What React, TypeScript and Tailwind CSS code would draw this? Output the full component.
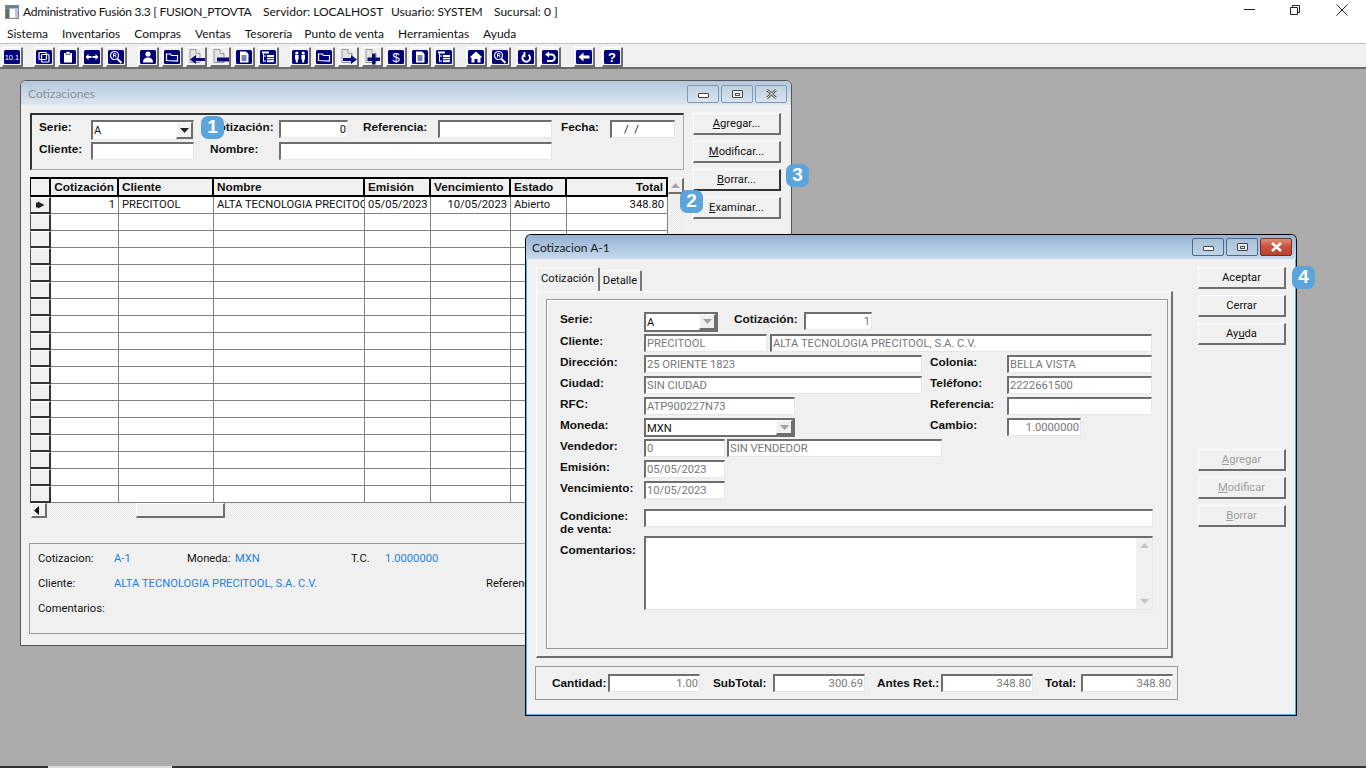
import type { ReactNode } from 'react';

const sans = "font-['Roboto',Arial,sans-serif]";
const ui = "font-['Lato',sans-serif]";
const bold = "font-['Liberation_Sans',Arial,sans-serif] font-bold text-[11.8px] leading-[14px] text-[#111] whitespace-nowrap";

const sunken = 'box-border border-t-2 border-l-2 border-r border-b border-t-[#6e6e6e] border-l-[#6e6e6e] border-r-[#e6e6e6] border-b-[#e6e6e6] bg-white';
const raised = 'box-border border-t border-l border-r-2 border-b-2 border-t-white border-l-white border-r-[#6e6e6e] border-b-[#6e6e6e] bg-[#f0f0f0]';
const raisedFocus = 'box-border border-t border-l border-r-2 border-b-2 border-t-white border-l-white border-r-[#333] border-b-[#333] bg-[#f0f0f0]';

type Glyph = string;

// Navy toolbar glyphs, all on a 16x14 box
function ToolIcon({ name }: { name: Glyph }) {
  if (name.startsWith('page')) {
    const arrow: Record<string, string> = {
      pageLeft: 'M17 9H8V6L2 10.500l6 4.500V12h9z',
      pageMinus: 'M5 8.500h12v4H5z',
      pageRight: 'M3 9h8V6l6 4.500-6 4.500V12H3z',
      pagePlus: 'M8 5h3.500v3.500H16V12h-4.500v3.500H8V12H3.500V8.500H8z',
    };
    return (
      <svg width="17" height="16" viewBox="0 0 17 16" className="block">
        <path d="M2 .5h6l4 4v9H2z" fill="#e4e4e4" stroke="#9a9a9a" />
        <path d="M8 .5v4h4" fill="#fff" stroke="#9a9a9a" />
        <path d={arrow[name]} fill="#0a0a78" />
      </svg>
    );
  }
  const w = { stroke: '#fff', fill: 'none', strokeWidth: 1.2 };
  const glyph: Record<string, ReactNode> = {
    ten: <text x="8" y="10" textAnchor="middle" fontSize="7.500" fontWeight="400" fill="#fff" fontFamily="Liberation Sans">10.1</text>,
    copy: <g {...w}><rect x="3" y="2.500" width="7.500" height="7" rx="1" /><rect x="5.500" y="4.500" width="7.500" height="7.500" rx="1" /></g>,
    clip: <g><rect x="4" y="3" width="8" height="9.500" fill="#fff" /><rect x="6" y="1.500" width="4" height="3" fill="#fff" stroke="#00007a" strokeWidth=".6" /></g>,
    swap: <path d="M1.500 7l3-3v2h3v2h-3v2zM14.500 7l-3-3v2H8.500v2h3v2z" fill="#fff" />,
    find: <g {...w}><circle cx="6.500" cy="5.500" r="4" /><path d="M9.500 9l4 4" strokeWidth="2" /><path d="M5.500 7.500v-4h1.500a1 1 0 010 2H5.500M7 5.500l1.200 2" strokeWidth=".9" /></g>,
    user: <g fill="#fff"><circle cx="8" cy="4" r="2.600" /><path d="M3 12.500c0-3.500 2-5 5-5s5 1.500 5 5z" /></g>,
    folder: <path d="M2.500 10.500V4h4l1 1.500h6v5.500z" {...w} />,
    doc: <g><path d="M4 1.500h6l2.500 2.500v8.500H4z" fill="#fff" /><path d="M5.500 6h5M5.500 8h5M5.500 10h5" stroke="#00007a" strokeWidth="1" /></g>,
    tree: <g fill="#fff"><rect x="2" y="1.500" width="7" height="2" /><rect x="3" y="3.500" width="1" height="8" /><rect x="3" y="5.500" width="3" height="1" /><rect x="3" y="10.500" width="3" height="1" /><rect x="7" y="5" width="7" height="2" /><rect x="7" y="7.800" width="7" height="1.500" /><rect x="7" y="10.200" width="7" height="2" /></g>,
    people: <g fill="#fff"><circle cx="4.800" cy="3" r="1.600" /><rect x="3" y="5" width="3.600" height="4.500" /><rect x="3.800" y="9" width="2" height="3.500" /><circle cx="11.200" cy="3" r="1.600" /><rect x="9.400" y="5" width="3.600" height="4.500" /><rect x="10.200" y="9" width="2" height="3.500" /></g>,
    dollar: <text x="8" y="12" textAnchor="middle" fontSize="13" fill="#fff" fontFamily="Liberation Sans">$</text>,
    home: <path d="M8 1.500L1.500 7.500H3.500v5h3v-3.500h3v3.500h3v-5h2z" fill="#fff" />,
    redo: <g {...w} strokeWidth="2"><path d="M10.500 4.800a3.800 3.800 0 11-4.500 0" /><path d="M6.500 2v5" strokeWidth="1.800" /></g>,
    undo: <g><path d="M5 4.500h4.500a3.200 3.200 0 010 6.500H5" {...w} strokeWidth="2" /><path d="M7 1.500v6L3 4.500z" fill="#fff" /></g>,
    back: <path d="M2.500 7l5-4.500v3h6v3h-6v3z" fill="#fff" />,
    help: <text x="8" y="12" textAnchor="middle" fontSize="13" fontWeight="700" fill="#fff" fontFamily="Liberation Sans">?</text>,
  };
  return (
    <svg width="16" height="14" viewBox="0 0 16 14" className="block">
      <rect width="16" height="14" rx="1.500" fill="#00007a" />
      {glyph[name]}
    </svg>
  );
}

const toolbar: { ml: string; icons: Glyph[] }[] = [
  { ml: 'ml-[2px]', icons: ['ten'] },
  { ml: 'ml-[11px]', icons: ['copy', 'clip', 'swap', 'find'] },
  { ml: 'ml-[11px]', icons: ['user', 'folder', 'pageLeft', 'pageMinus', 'doc', 'tree'] },
  { ml: 'ml-[11px]', icons: ['people', 'folder', 'pageRight', 'pagePlus', 'dollar', 'doc', 'tree'] },
  { ml: 'ml-[11px]', icons: ['home', 'find'] },
  { ml: 'ml-[5px]', icons: ['redo', 'undo'] },
  { ml: 'ml-[13px]', icons: ['back'] },
  { ml: 'ml-[7px]', icons: ['help'] },
];

function Badge({ n, className }: { n: number; className: string }) {
  return (
    <div className={`absolute z-20 flex h-[23px] w-[23px] items-center justify-center rounded-[7px] bg-[#5ba4dc] font-['Liberation_Sans',Arial,sans-serif] text-[19px] font-bold text-white ${className}`}>
      {n}
    </div>
  );
}

function Btn({ children, focused, disabled }: { children: ReactNode; focused?: boolean; disabled?: boolean }) {
  return (
    <div
      className={`flex h-[22px] w-[88px] items-center justify-center pt-[1px] ${focused ? raisedFocus : raised} ${sans} text-[11.2px] ${disabled ? 'text-[#a0a0a0]' : 'text-[#111]'}`}
    >
      <span>{children}</span>
    </div>
  );
}

function Input({ w, h = 'h-[18px]', right, value, gray = true }: { w: string; h?: string; right?: boolean; value?: string; gray?: boolean }) {
  return (
    <div className={`${w} ${h} shrink-0 ${sunken} ${sans} overflow-hidden whitespace-pre px-[1px] text-[11.2px] leading-[15px] ${right ? 'text-right' : ''} ${gray ? 'text-[#777]' : 'text-[#111]'}`}>
      {value}
    </div>
  );
}

function Arrow({ dir, color = '#333' }: { dir: 'up' | 'down' | 'left'; color?: string }) {
  const d = { up: 'M0 5l4.500-5 4.500 5z', down: 'M0 0l4.500 5 4.500-5z', left: 'M5 0v9L0 4.500z' }[dir];
  return (
    <svg width="9" height="9" viewBox="0 0 9 9" className="block">
      <path d={d} fill={color} transform={dir === 'left' ? '' : 'translate(0 2)'} />
    </svg>
  );
}

function Combo({ w, value, disabled, h = 'h-[20px]' }: { w: string; value: string; disabled?: boolean; h?: string }) {
  const frame = disabled
    ? 'box-border border-2 border-[#6e6e6e] bg-white'
    : sunken;
  return (
    <div className={`${w} ${h} shrink-0 ${frame} relative flex ${sans} text-[11.2px] text-[#111]`}>
      <span className="flex-1 px-[1px] leading-[17px]">{value}</span>
      <div className={`flex w-[17px] items-center justify-center ${raised}`}>
        <Arrow dir="down" color={disabled ? '#a0a0a0' : '#222'} />
      </div>
    </div>
  );
}

function WinCtl({ active, kind }: { active: boolean; kind: 'min' | 'max' | 'close' }) {
  const red = kind === 'close' && active;
  return (
    <div
      className={`flex h-[18px] w-[32px] items-center justify-center rounded-[2px] border ${
        red
          ? 'border-[#7a2e22] bg-gradient-to-b from-[#dc8c78] via-[#c8503c] to-[#c04030]'
          : active
            ? 'border-[#4f6a88] bg-gradient-to-b from-[#a8c0d8] to-[#c0d4e8]'
            : 'border-[#8298b0] bg-gradient-to-b from-[#c0d0e0] to-[#d8e4f0]'
      }`}
    >
      {kind === 'min' && <div className="mt-[3px] h-[5px] w-[11px] rounded-[1px] border border-[#444] bg-white" />}
      {kind === 'max' && (
        <div className="flex h-[8px] w-[11px] items-center justify-center rounded-[1px] border border-[#444] bg-white/60">
          <div className="h-[3px] w-[5px] border border-[#555]" />
        </div>
      )}
      {kind === 'close' && (
        <svg width="13" height="10" viewBox="0 0 13 10" className="block">
          <path d="M2 1l9 8M11 1L2 9" stroke={red ? '#fff' : '#555'} strokeWidth="2.600" />
          {!red && <path d="M2 1l9 8M11 1L2 9" stroke="#eee" strokeWidth="1" />}
        </svg>
      )}
    </div>
  );
}

const columns = [
  { w: 'w-[68px]', head: 'Cotización', end: true, right: true, cell: '1' },
  { w: 'w-[95px]', head: 'Cliente', cell: 'PRECITOOL' },
  { w: 'w-[151px]', head: 'Nombre', cell: 'ALTA TECNOLOGIA PRECITOOL, S.A. C.V.' },
  { w: 'w-[66px]', head: 'Emisión', right: true, cell: '05/05/2023' },
  { w: 'w-[80px]', head: 'Vencimiento', right: true, cell: '10/05/2023' },
  { w: 'w-[56px]', head: 'Estado', cell: 'Abierto' },
  { w: 'w-[101px]', head: 'Total', end: true, right: true, cell: '348.80' },
];

const dither = 'bg-[repeating-conic-gradient(#e4e4e4_0_25%,#fafafa_0_50%)] bg-size-[2px_2px]';

function Grid() {
  return (
    <div className="w-[638px]">
      <div className="flex h-[18px] border-t-2 border-black bg-[#f0f0f0]">
        <div className="box-border h-[16px] w-[21px] border-r-2 border-l border-black" />
        {columns.map((c) => (
          <div
            key={c.head}
            className={`${c.w} box-border flex h-[16px] items-center border-r-2 border-black px-[3px] ${c.end ? 'justify-end' : ''} ${bold}`}
          >
            {c.head}
          </div>
        ))}
      </div>
      <div className="border-t-2 border-black">
        {Array.from({ length: 18 }, (_, i) => (
          <div key={i} className="flex h-[17px] bg-white">
            <div className="box-border flex w-[21px] items-center justify-center border-l border-t border-r-2 border-b-2 border-l-[#555] border-t-white border-r-[#333] border-b-[#333] bg-[#f0f0f0]">
              {i === 0 && (
                <svg width="10" height="8" viewBox="0 0 10 8" className="block">
                  <path d="M1 1.500h2V.5L9.500 4 3 7.500V6.500H1z" fill="#222" />
                </svg>
              )}
            </div>
            {columns.map((c) => (
              <div
                key={c.head}
                className={`${c.w} box-border overflow-hidden whitespace-nowrap border-r border-b border-[#808080] px-[3px] ${sans} text-[11.2px] leading-[15px] text-[#111] ${c.right ? 'text-right' : ''}`}
              >
                {i === 0 ? c.cell : ''}
              </div>
            ))}
          </div>
        ))}
      </div>
    </div>
  );
}

function ListWindow() {
  return (
    <div className="absolute top-[80px] left-[20px] flex h-[566px] w-[772px] flex-col overflow-hidden rounded-t-[6px] border border-[#555] bg-[#f0f0f0]">
      <div className="flex h-[24px] shrink-0 items-center justify-between bg-gradient-to-b from-[#b4c8dc] to-[#dce6f0] pr-[4px] pl-[7px]">
        <span className={`${ui} pt-[2px] text-[12px] text-[#8c9196]`}>Cotizaciones</span>
        <div className="flex gap-[2px] pt-[2px]">
          <WinCtl active={false} kind="min" />
          <WinCtl active={false} kind="max" />
          <WinCtl active={false} kind="close" />
        </div>
      </div>
      <div className="flex flex-1 pt-[8px] pl-[9px]">
        <div className="w-[654px] shrink-0">
          <div className="box-border h-[57px] w-[654px] border-t-2 border-l-2 border-r border-b border-t-[#333] border-l-[#333] border-r-[#aaa] border-b-[#aaa] pt-[5px] pl-[7px]">
            <div className="flex h-[22px]">
              <div className={`${bold} w-[52px]`}>Serie:</div>
              <Combo w="w-[103px]" value="A" />
              <div className={`${bold} ml-[16px] w-[69px]`}>Cotización:</div>
              <Input w="w-[69px]" right value="0" gray={false} />
              <div className={`${bold} ml-[15px] w-[75px]`}>Referencia:</div>
              <Input w="w-[114px]" />
              <div className={`${bold} ml-[9px] w-[49px]`}>Fecha:</div>
              <Input w="w-[65px]" value="    /  /" gray={false} />
            </div>
            <div className="flex">
              <div className={`${bold} w-[52px]`}>Cliente:</div>
              <Input w="w-[103px]" />
              <div className={`${bold} ml-[16px] w-[69px]`}>Nombre:</div>
              <Input w="w-[273px]" />
            </div>
          </div>
          <div className="mt-[7px] flex">
            <Grid />
            <div className={`w-[16px] ${dither}`}>
              <div className={`mt-[1px] flex h-[16px] items-center justify-center ${raised}`}>
                <Arrow dir="up" color="#a8a8a8" />
              </div>
            </div>
          </div>
          <div className={`flex h-[15px] w-[654px] ${dither}`}>
            <div className={`ml-[1px] flex w-[16px] items-center justify-center ${raised}`}>
              <Arrow dir="left" color="#111" />
            </div>
            <div className={`ml-[89px] w-[89px] ${raised}`} />
          </div>
          <div className={`-ml-px mt-[25px] h-[91px] w-[753px] border border-[#999] ${sans} text-[11.2px] leading-[14px] text-[#111]`}>
            <div className="mt-[8px] flex pl-[8px]">
              <span className="w-[76px]">Cotizacion:</span>
              <span className="w-[73px] text-[#1e80e0]">A-1</span>
              <span className="w-[48px]">Moneda:</span>
              <span className="w-[116px] text-[#1e80e0]">MXN</span>
              <span className="w-[34px]">T.C.</span>
              <span className="text-[#1e80e0]">1.0000000</span>
            </div>
            <div className="mt-[11px] flex pl-[8px]">
              <span className="w-[76px]">Cliente:</span>
              <span className="w-[372px] text-[#1e80e0]">ALTA TECNOLOGIA PRECITOOL, S.A. C.V.</span>
              <span>Referencia:</span>
            </div>
            <div className="mt-[11px] pl-[8px]">Comentarios:</div>
          </div>
        </div>
        <div className="ml-[9px] flex flex-col gap-[6px]">
          <Btn><u>A</u>gregar...</Btn>
          <Btn><u>M</u>odificar...</Btn>
          <Btn focused><u>B</u>orrar...</Btn>
          <Btn><u>E</u>xaminar...</Btn>
        </div>
      </div>
    </div>
  );
}

function Row({ label, h = 'h-[21px]', labelPad = '', children }: { label: string; h?: string; labelPad?: string; children: ReactNode }) {
  return (
    <div className={`flex ${h}`}>
      <div className={`${bold} ${labelPad} w-[84px] shrink-0`}>{label}</div>
      {children}
    </div>
  );
}

function SideLabel({ children, w = 'w-[77px]', ml = 'ml-[8px]' }: { children: string; w?: string; ml?: string }) {
  return <div className={`${bold} ${w} ${ml} shrink-0`}>{children}</div>;
}

function QuoteWindow() {
  return (
    <div className="absolute top-[234px] left-[525px] z-10 flex h-[482px] w-[772px] flex-col overflow-hidden rounded-t-[6px] border border-black border-r-[#111] bg-[#f0f0f0] shadow-[inset_-1px_-1px_0_#4fb4e4,inset_1px_0_0_#4fb4e4]">
      <div className="flex h-[24px] shrink-0 items-center justify-between bg-gradient-to-b from-[#96b2d2] to-[#c6daee] pr-[4px] pl-[6px]">
        <span className={`${ui} pt-[2px] text-[12px] text-[#1c1c1c]`}>Cotizacion A-1</span>
        <div className="flex gap-[2px]">
          <WinCtl active kind="min" />
          <WinCtl active kind="max" />
          <WinCtl active kind="close" />
        </div>
      </div>
      <div className="flex flex-1 pt-[8px] pl-[10px]">
        <div className="w-[643px] shrink-0">
          <div className={`flex h-[24px] items-end ${sans} text-[11.2px] text-[#111]`}>
            <div className="flex h-[24px] w-[64px] items-center justify-center rounded-t-[2px] border-t border-l border-r-2 border-t-white border-l-white border-r-[#777] pb-[1px]">Cotización</div>
            <div className="flex h-[21px] w-[42px] items-center justify-center rounded-t-[2px] border-t border-r-2 border-t-white border-r-[#777] pt-[1px]">Detalle</div>
          </div>
          <div className="box-border h-[367px] w-[637px] border-t border-l border-r-2 border-b-2 border-t-white border-l-white border-r-[#6e6e6e] border-b-[#6e6e6e] pt-[7px] pl-[9px]">
            <div className="box-border h-[350px] w-[622px] border border-[#999] pt-[12px] pl-[13px] shadow-[inset_1px_1px_0_#fff]">
              <Row label="Serie:" h="h-[22px]">
                <Combo w="w-[74px]" value="A" disabled />
                <SideLabel w="w-[70px]" ml="ml-[16px]">Cotización:</SideLabel>
                <Input w="w-[68px]" right value="1" />
              </Row>
              <Row label="Cliente:">
                <Input w="w-[123px]" value="PRECITOOL" />
                <div className="w-[3px]" />
                <Input w="w-[382px]" value="ALTA TECNOLOGIA PRECITOOL, S.A. C.V." />
              </Row>
              <Row label="Dirección:">
                <Input w="w-[278px]" value="25 ORIENTE 1823" />
                <SideLabel>Colonia:</SideLabel>
                <Input w="w-[145px]" value="BELLA VISTA" />
              </Row>
              <Row label="Ciudad:">
                <Input w="w-[278px]" value="SIN CIUDAD" />
                <SideLabel>Teléfono:</SideLabel>
                <Input w="w-[145px]" value="2222661500" />
              </Row>
              <Row label="RFC:">
                <Input w="w-[151px]" value="ATP900227N73" />
                <SideLabel ml="ml-[135px]">Referencia:</SideLabel>
                <Input w="w-[145px]" />
              </Row>
              <Row label="Moneda:">
                <Combo w="w-[151px]" value="MXN" disabled h="h-[19px]" />
                <SideLabel ml="ml-[135px]">Cambio:</SideLabel>
                <Input w="w-[74px]" right value="1.0000000" />
              </Row>
              <Row label="Vendedor:">
                <Input w="w-[81px]" value="0" />
                <div className="w-[2px]" />
                <Input w="w-[215px]" value="SIN VENDEDOR" />
              </Row>
              <Row label="Emisión:">
                <Input w="w-[81px]" value="05/05/2023" />
              </Row>
              <Row label="Vencimiento:" h="h-[28px]">
                <Input w="w-[81px]" value="10/05/2023" />
              </Row>
              <Row label="Condicione:" h="h-[27px]">
                <Input w="w-[509px]" />
              </Row>
              <div className={`${bold} -mt-[14px] h-[14px]`}>de venta:</div>
              <Row label="Comentarios:" labelPad="pt-[7px]">
                <div className={`flex h-[74px] w-[509px] ${sunken} justify-end`}>
                  <div className="flex w-[16px] flex-col items-center justify-between bg-[#f0f0f0] py-[3px]">
                    <Arrow dir="up" color="#c4c4c4" />
                    <Arrow dir="down" color="#c4c4c4" />
                  </div>
                </div>
              </Row>
            </div>
          </div>
          <div className="-ml-px mt-[8px] box-border flex h-[34px] w-[643px] items-center border border-[#999] pl-[16px]">
            <div className={`${bold} w-[56px]`}>Cantidad:</div>
            <Input w="w-[92px]" right value="1.00" />
            <div className={`${bold} ml-[13px] w-[60px]`}>SubTotal:</div>
            <Input w="w-[92px]" right value="300.69" />
            <div className={`${bold} ml-[12px] w-[64px]`}>Antes Ret.:</div>
            <Input w="w-[92px]" right value="348.80" />
            <div className={`${bold} ml-[12px] w-[36px]`}>Total:</div>
            <Input w="w-[92px]" right value="348.80" />
          </div>
        </div>
        <div className="ml-[19px] flex flex-col">
          <div className="flex flex-col gap-[6px]">
            <Btn>Aceptar</Btn>
            <Btn>Cerrar</Btn>
            <Btn>Ay<u>u</u>da</Btn>
          </div>
          <div className="mt-[104px] flex flex-col gap-[6px]">
            <Btn disabled><u>A</u>gregar</Btn>
            <Btn disabled><u>M</u>odificar</Btn>
            <Btn disabled><u>B</u>orrar</Btn>
          </div>
        </div>
      </div>
    </div>
  );
}

export default function App() {
  return (
    <div className="relative flex h-[768px] w-[1366px] flex-col overflow-hidden bg-[#ababab]">
      <div className="flex h-[24px] items-center bg-white pl-[5px]">
        <svg width="14" height="14" viewBox="0 0 14 14" className="block shrink-0">
          <rect x=".5" y=".5" width="13" height="13" fill="#fff" stroke="#888" />
          <rect x="1" y="1" width="12" height="2.500" fill="#5b7fa6" />
          <rect x="1" y="3.500" width="3.500" height="9.500" fill="#5c6e66" />
          <rect x="10" y="3.500" width="3" height="9.500" fill="#b8c8d8" />
        </svg>
        <div className={`${ui} ml-[4px] flex text-[12px] whitespace-pre text-[#111]`}>
          <span className="w-[240px] tracking-[-0.27px]">Administrativo Fusión 3.3 [ FUSION_PTOVTA</span>
          <span className="w-[128px]">Servidor: LOCALHOST</span>
          <span className="w-[103px]">Usuario: SYSTEM</span>
          <span>Sucursal: 0 ]</span>
        </div>
        <div className="ml-auto flex h-full pr-[1px] text-[#111]">
          <svg width="46" height="24" viewBox="0 0 46 24" className="block"><path d="M17 9.500h11" stroke="#222" /></svg>
          <svg width="46" height="24" viewBox="0 0 46 24" className="block"><path d="M17.500 7.500h7v7h-7zM19.500 7.500v-2h7v7h-2" fill="none" stroke="#222" /></svg>
          <svg width="46" height="24" viewBox="0 0 46 24" className="block"><path d="M17.500 4.500l11 11M28.500 4.500l-11 11" stroke="#222" /></svg>
        </div>
      </div>
      <div className={`flex h-[19px] items-center bg-white pl-[7px] ${ui} text-[12px] text-[#111]`}>
        <span>Sistema</span>
        <span className="ml-[14px]">Inventarios</span>
        <span className="ml-[14px]">Compras</span>
        <span className="ml-[14px]">Ventas</span>
        <span className="ml-[14px]">Tesorería</span>
        <span className="ml-[12px]">Punto de venta</span>
        <span className="ml-[14px]">Herramientas</span>
        <span className="ml-[14px]">Ayuda</span>
      </div>
      <div className="flex h-[26px] items-start border-t border-b-2 border-t-[#c0c0c0] border-b-[#6a6a6a] bg-[#f0f0f0] pt-[3px]">
        {toolbar.map((g, i) => (
          <div key={i} className={`flex gap-[3px] ${g.ml}`}>
            {g.icons.map((name, j) => (
              <div key={j} className={`flex h-[20px] w-[21px] items-center justify-center ${raised}`}>
                <ToolIcon name={name} />
              </div>
            ))}
          </div>
        ))}
      </div>
      <ListWindow />
      <QuoteWindow />
      <Badge n={1} className="top-[116px] left-[201px]" />
      <Badge n={2} className="top-[190px] left-[680px]" />
      <Badge n={3} className="top-[164px] left-[786px]" />
      <Badge n={4} className="top-[266px] left-[1292px]" />
      <div className="absolute bottom-0 left-0 flex h-[2px] w-full bg-[#333]">
        <div className="ml-[48px] h-full w-[124px] bg-[#ddd]" />
      </div>
    </div>
  );
}
